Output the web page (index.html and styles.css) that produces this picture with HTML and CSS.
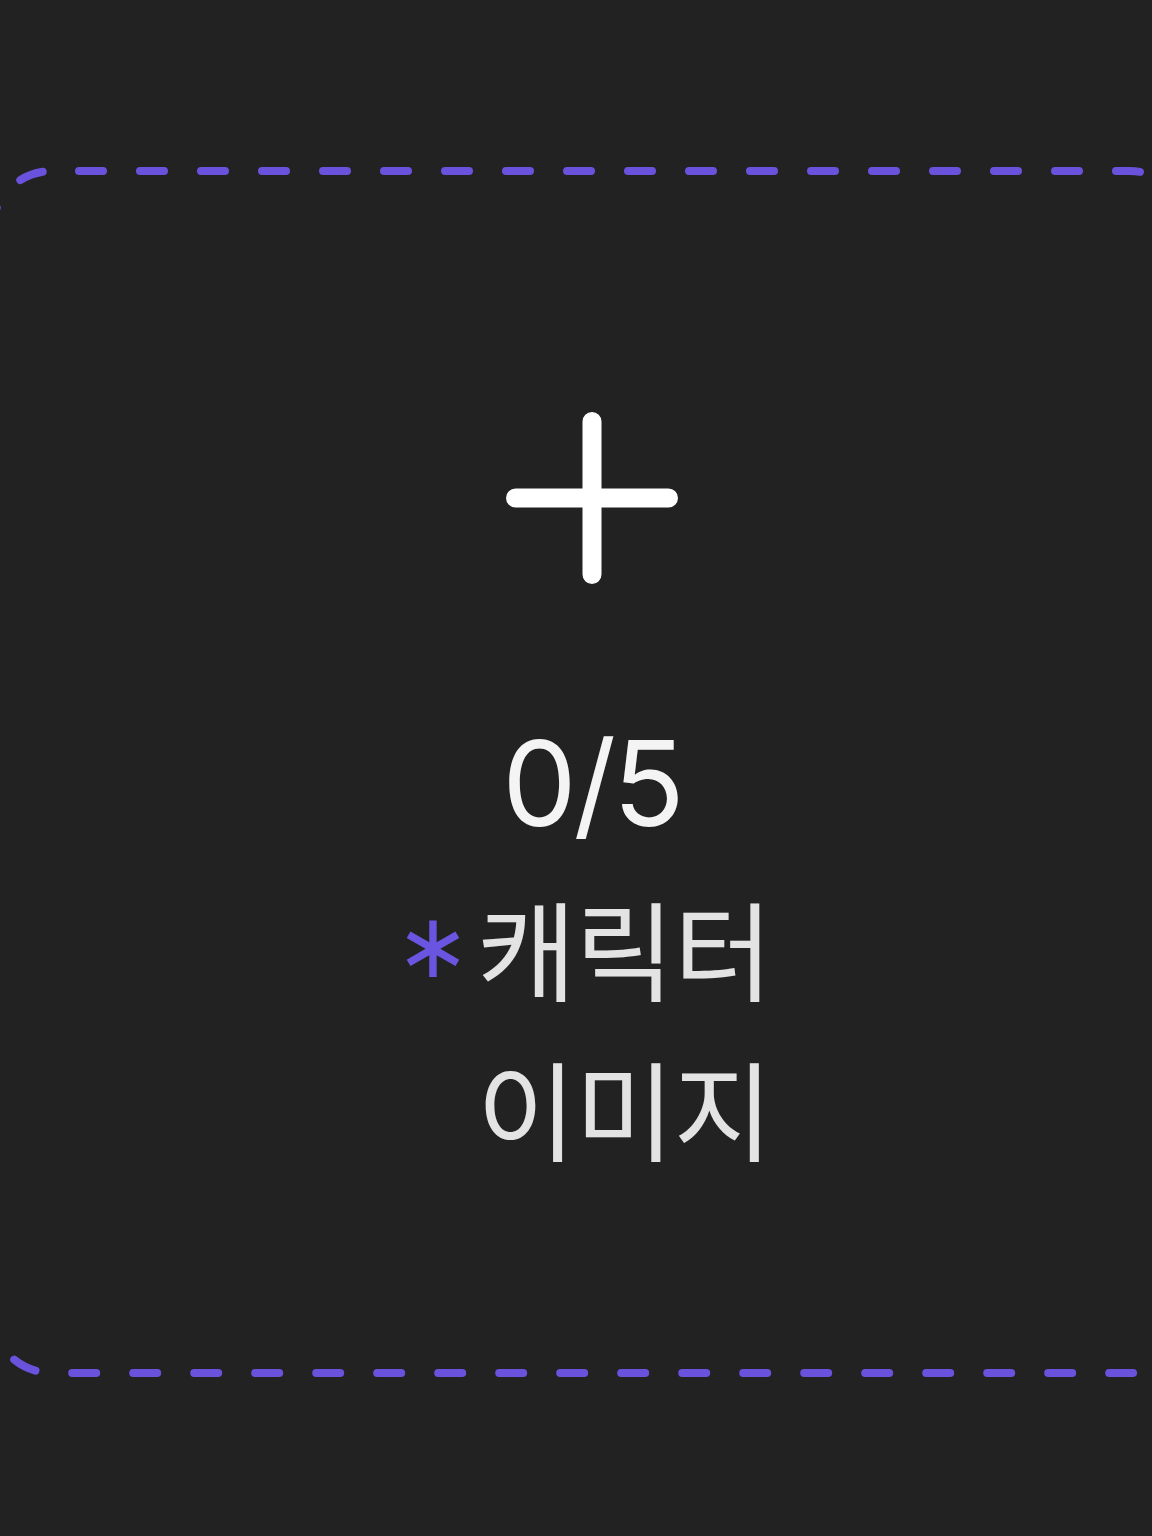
FILE: index.html
```html
<!DOCTYPE html>
<html lang="ko">
<head>
<meta charset="utf-8">
<title>캐릭터 이미지 업로드</title>
<link rel="stylesheet" href="styles.css">
</head>
<body>
<main class="page">
  <button class="upload-card" type="button">
    <svg class="upload-border" viewBox="0 0 1206 1210" width="1206" height="1210" aria-hidden="true">
      <rect x="4" y="4" width="1198" height="1202" rx="60" ry="60" fill="none" stroke="#6a52dc" stroke-width="8" stroke-linecap="round" stroke-dasharray="24 37" stroke-dashoffset="34"/>
    </svg>
    <svg class="plus-icon" viewBox="0 0 172 172" width="172" height="172" aria-hidden="true">
      <path d="M86 9.5 V162.5 M9.5 86 H162.5" stroke="#ffffff" stroke-width="19" stroke-linecap="round" fill="none"/>
    </svg>
    <span class="count">0/5</span>
    <span class="label-row">
      <span class="required">∗</span>
      <span class="label-text">캐릭터 이미지</span>
    </span>
  </button>
</main>
</body>
</html>
```

FILE: styles.css
```css
html, body {
  margin: 0;
  padding: 0;
  background: #222223;
  overflow: hidden;
}

.page {
  width: 1152px;
  height: 1536px;
  overflow: hidden;
  padding-top: 167px;
  box-sizing: border-box;
}

.upload-card {
  position: relative;
  margin-left: -12px;
  width: 1206px;
  height: 1210px;
  padding: 245px 0 0 2px;
  border: none;
  background: transparent;
  display: flex;
  flex-direction: column;
  align-items: center;
  box-sizing: border-box;
  cursor: pointer;
}

.upload-border {
  position: absolute;
  left: 0;
  top: 0;
}

.plus-icon {
  display: block;
  width: 172px;
  height: 172px;
}

.count {
  margin-top: 140px;
  font-family: Inter, "Noto Sans", sans-serif;
  font-size: 118px;
  line-height: 118px;
  font-weight: 400;
  color: #f4f4f4;
  letter-spacing: -3px;
  height: 118px;
}

.label-row {
  display: flex;
  align-items: flex-start;
  margin-top: 24px;
  gap: 6px;
}

.required {
  font-family: "DejaVu Sans", sans-serif;
  font-size: 90px;
  line-height: 160px;
  color: #6a55e0;
}

.label-text {
  width: 312px;
  text-align: left;
  font-family: "Noto Sans CJK KR", sans-serif;
  font-size: 108px;
  line-height: 160px;
  font-weight: 400;
  color: #e3e3e3;
  letter-spacing: -1px;
}
```
